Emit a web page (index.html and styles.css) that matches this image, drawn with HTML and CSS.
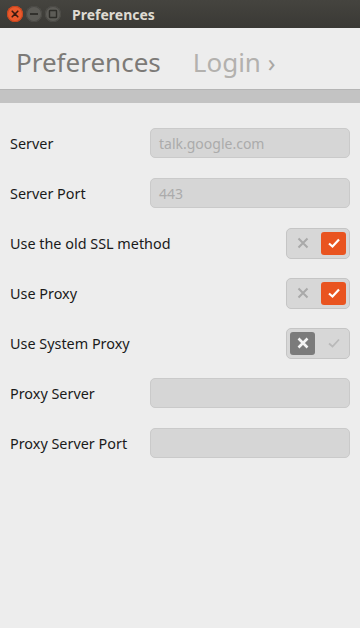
FILE: index.html
```html
<!DOCTYPE html>
<html>
<head>
<meta charset="utf-8">
<link rel="stylesheet" href="styles.css">
</head>
<body>
<div class="window">
  <div class="titlebar">
    <div class="wbtns">
      <span class="wbtn close"><svg width="8" height="8" viewBox="0 0 8 8"><path d="M1.2 1.2 L6.8 6.8 M6.8 1.2 L1.2 6.8" stroke="#3a1a10" stroke-width="1.6" stroke-linecap="round"/></svg></span>
      <span class="wbtn"><svg width="10" height="8" viewBox="0 0 10 8"><path d="M1 4 H9" stroke="#2e2d29" stroke-width="1.8"/></svg></span>
      <span class="wbtn"><svg width="10" height="10" viewBox="0 0 10 10"><rect x="1.5" y="1.5" width="7" height="7" fill="none" stroke="#2e2d29" stroke-width="1.4" rx="0.5"/></svg></span>
    </div>
    <div class="wtitle">Preferences</div>
  </div>
  <header class="nav">
    <span class="nav-current">Preferences</span>
    <span class="nav-next">Login <span class="chev">›</span></span>
  </header>
  <div class="band"></div>
  <div class="rows">
    <div class="row"><span class="label">Server</span><div class="field"><span class="ph">talk.google.com</span></div></div>
    <div class="row"><span class="label">Server Port</span><div class="field"><span class="ph">443</span></div></div>
    <div class="row"><span class="label">Use the old SSL method</span>
      <div class="toggle">
        <span class="half"><svg width="12" height="12" viewBox="0 0 12 12"><path d="M1.5 1.5 L10.5 10.5 M10.5 1.5 L1.5 10.5" stroke="#a9a9a9" stroke-width="2"/></svg></span>
        <span class="half on"><svg width="14" height="12" viewBox="0 0 14 12"><path d="M2 6.5 L5.5 9.5 L12 2.5" fill="none" stroke="#fff" stroke-width="2.2"/></svg></span>
      </div>
    </div>
    <div class="row"><span class="label">Use Proxy</span>
      <div class="toggle">
        <span class="half"><svg width="12" height="12" viewBox="0 0 12 12"><path d="M1.5 1.5 L10.5 10.5 M10.5 1.5 L1.5 10.5" stroke="#a9a9a9" stroke-width="2"/></svg></span>
        <span class="half on"><svg width="14" height="12" viewBox="0 0 14 12"><path d="M2 6.5 L5.5 9.5 L12 2.5" fill="none" stroke="#fff" stroke-width="2.2"/></svg></span>
      </div>
    </div>
    <div class="row"><span class="label">Use System Proxy</span>
      <div class="toggle">
        <span class="half off"><svg width="12" height="12" viewBox="0 0 12 12"><path d="M1.5 1.5 L10.5 10.5 M10.5 1.5 L1.5 10.5" stroke="#f4f4f4" stroke-width="2.6"/></svg></span>
        <span class="half"><svg width="14" height="12" viewBox="0 0 14 12"><path d="M2 6.5 L5.5 9.5 L12 2.5" fill="none" stroke="#b9b9b9" stroke-width="1.8"/></svg></span>
      </div>
    </div>
    <div class="row"><span class="label">Proxy Server</span><div class="field"></div></div>
    <div class="row"><span class="label">Proxy Server Port</span><div class="field"></div></div>
  </div>
</div>
</body>
</html>
```

FILE: styles.css
```css
html, body {
  margin: 0;
  padding: 0;
}
body {
  width: 360px;
  height: 628px;
  background: #ededed;
  font-family: "Noto Sans", "Open Sans", sans-serif;
  overflow: hidden;
}
.window {
  display: flex;
  flex-direction: column;
}
.titlebar {
  height: 28px;
  background: linear-gradient(#45443f, #3a3935);
  display: flex;
  align-items: center;
  padding-left: 7px;
  box-sizing: border-box;
}
.wbtns {
  display: flex;
  gap: 3px;
}
.wbtn {
  width: 16px;
  height: 16px;
  border-radius: 50%;
  background: #5d5c57;
  box-shadow: inset 0 0 0 1px #4a4945;
  display: flex;
  align-items: center;
  justify-content: center;
}
.wbtn.close {
  background: #ea5a2d;
  box-shadow: inset 0 0 0 1px #c8451d;
}
.wtitle {
  margin-left: 11px;
  color: #dfdbd2;
  font-weight: bold;
  font-size: 14px;
  font-family: "Noto Sans", sans-serif;
}
.nav {
  height: 61px;
  display: flex;
  align-items: flex-end;
  padding: 0 0 14px 16px;
  box-sizing: border-box;
  gap: 32px;
  font-size: 26px;
  line-height: 1;
}
.nav-current {
  color: #7c7a77;
}
.nav-next {
  color: #b3b1ae;
}
.chev {
  font-size: 25px;
  color: #a9a7a4;
}
.band {
  height: 14px;
  background: #c3c3c3;
  border-top: 1px solid #b5b5b5;
  box-sizing: border-box;
}
.rows {
  padding-top: 15px;
}
.row {
  height: 50px;
  display: flex;
  align-items: center;
  justify-content: space-between;
  padding: 0 10px;
}
.label {
  font-size: 14.4px;
  color: #1a1a1a;
}
.field {
  width: 200px;
  height: 30px;
  box-sizing: border-box;
  border: 1px solid #cacaca;
  border-radius: 5px;
  background: #d6d6d6;
  display: flex;
  align-items: center;
  padding-left: 8px;
}
.ph {
  font-size: 14px;
  color: #ababab;
}
.toggle {
  width: 64px;
  height: 31px;
  box-sizing: border-box;
  border: 1px solid #c5c5c5;
  border-radius: 5px;
  background: #d7d7d7;
  display: flex;
  padding: 3px;
  gap: 6px;
}
.half {
  flex: 1;
  border-radius: 3px;
  display: flex;
  align-items: center;
  justify-content: center;
}
.half.on {
  background: #e95420;
}
.half.off {
  background: #7b7b7b;
}
```
